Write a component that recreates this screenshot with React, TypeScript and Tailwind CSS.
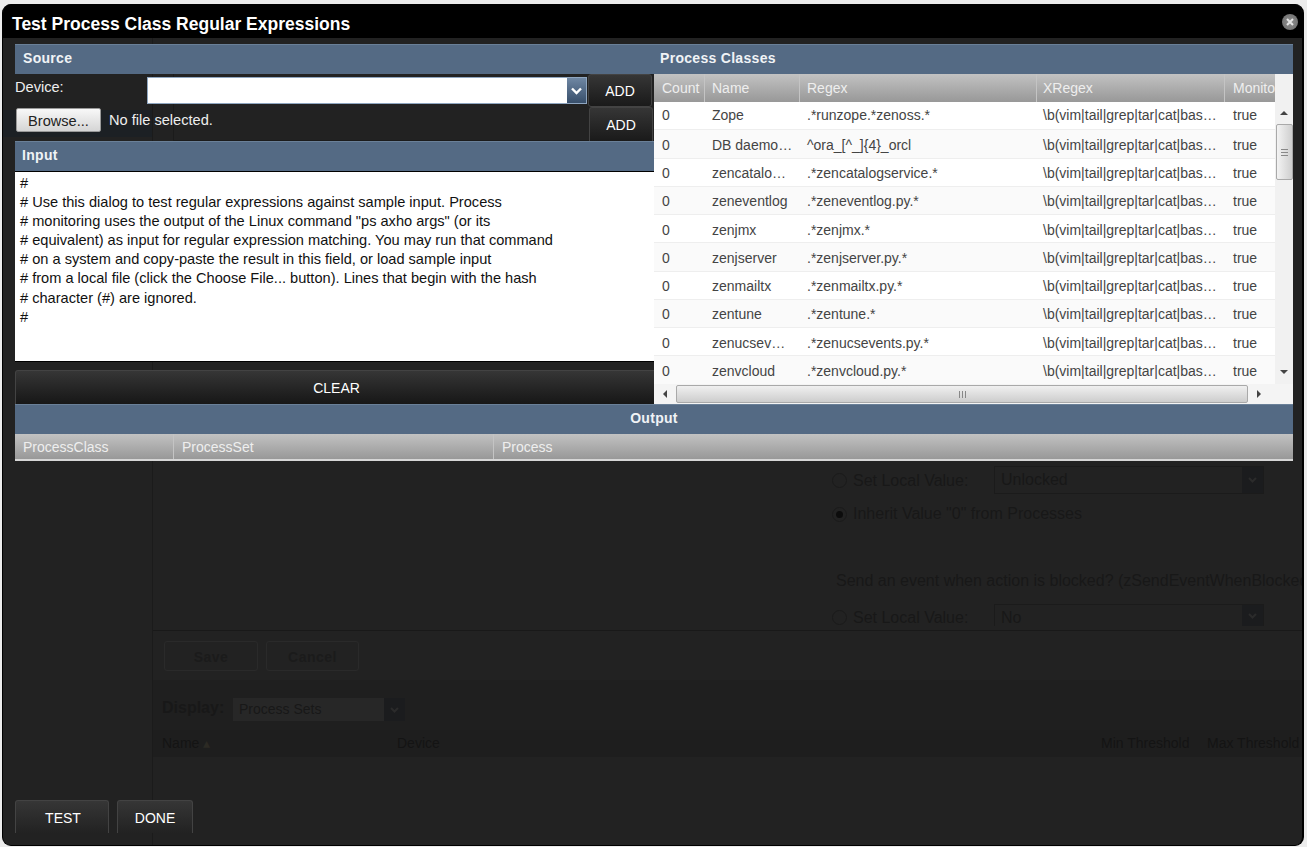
const FONT = "font-['Liberation_Sans',Arial,sans-serif]";

const processClasses = [
  ['Zope', '.*runzope.*zenoss.*'],
  ['DB daemo…', '^ora_[^_]{4}_orcl'],
  ['zencatalo…', '.*zencatalogservice.*'],
  ['zeneventlog', '.*zeneventlog.py.*'],
  ['zenjmx', '.*zenjmx.*'],
  ['zenjserver', '.*zenjserver.py.*'],
  ['zenmailtx', '.*zenmailtx.py.*'],
  ['zentune', '.*zentune.*'],
  ['zenucsev…', '.*zenucsevents.py.*'],
  ['zenvcloud', '.*zenvcloud.py.*'],
];

const inputText = `#
# Use this dialog to test regular expressions against sample input. Process
# monitoring uses the output of the Linux command "ps axho args" (or its
# equivalent) as input for regular expression matching. You may run that command
# on a system and copy-paste the result in this field, or load sample input
# from a local file (click the Choose File... button). Lines that begin with the hash
# character (#) are ignored.
#`;

const SectionHeader = ({ children, className = '' }: { children: React.ReactNode; className?: string }) => (
  <div className={`h-[30px] pb-[2px] bg-[#546a84] border-t border-[#6a8098] text-[14px] tracking-[0.3px] font-bold text-[#f0f3f6] flex items-center ${className}`}>
    {children}
  </div>
);

const DarkButton = ({ children, className = '' }: { children: React.ReactNode; className?: string }) => (
  <div className={`flex items-center justify-center rounded-t-[3px] border border-[#434343] bg-gradient-to-b from-[#363636] text-[14px] text-white ${className}`}>
    {children}
  </div>
);

const HeaderCell = ({ children, className = '' }: { children: React.ReactNode; className?: string }) => (
  <div className={`h-full shrink-0 overflow-hidden whitespace-nowrap border-r border-[#c4c4c4] flex items-center ${className}`}>
    {children}
  </div>
);

const GhostTrigger = () => (
  <div className="absolute right-0 top-0 flex h-full w-[21px] items-center justify-center bg-[#1b1c1e]">
    <svg width="9" height="6" viewBox="0 0 9 6"><path d="M1 1 L4.5 4.5 L8 1" fill="none" stroke="#2b2b2b" strokeWidth="2" /></svg>
  </div>
);

// the page behind the dialog, dimmed by the mask
const GhostPage = () => (
  <div className="absolute inset-0 overflow-hidden text-[16px] text-[#181818]">
    <div className="absolute left-[149px] top-0 bottom-0 w-px bg-[#1b1b1b]" />
    <div className="absolute left-0 top-[106px] h-[27px] w-[149px] bg-[#1c2024]" />
    <div className="absolute left-[170px] right-[400px] top-[70px] h-[67px] border-l border-b border-[#1b1b1b]" />
    <div className="absolute left-[150px] right-0 top-[626px] h-px bg-[#191919]" />
    <div className="absolute left-[150px] right-0 top-[676px] h-[77px] bg-[#1f1f1f]" />
    <div className="absolute left-[150px] right-0 top-[726px] h-[27px] bg-[#1e1e1e]" />
    <div className="absolute left-[829px] top-[469px] size-[15px] rounded-full border border-[#1a1a1a]" />
    <span className="absolute left-[850px] top-[465px]">Set Local Value:</span>
    <div className="absolute left-[991px] top-[462px] h-[28px] w-[270px] border border-[#1b1b1b]">
      <span className="absolute left-[6px] top-[1px]">Unlocked</span>
      <GhostTrigger />
    </div>
    <div className="absolute left-[829px] top-[503px] size-[15px] rounded-full border border-[#1a1a1a] p-[3px]">
      <div className="size-full rounded-full bg-[#0c0c0c]" />
    </div>
    <span className="absolute left-[850px] top-[498px]">Inherit Value "0" from Processes</span>
    <span className="absolute left-[833px] top-[565px] whitespace-nowrap">Send an event when action is blocked? (zSendEventWhenBlocked)</span>
    <div className="absolute left-[829px] top-[606px] size-[15px] rounded-full border border-[#1a1a1a]" />
    <span className="absolute left-[850px] top-[602px]">Set Local Value:</span>
    <div className="absolute left-[991px] top-[600px] h-[22px] w-[270px] border border-b-0 border-[#1b1b1b]">
      <span className="absolute left-[6px] top-[1px]">No</span>
      <GhostTrigger />
    </div>
    <div className="absolute left-[161px] top-[637px] flex h-[30px] w-[94px] items-center justify-center rounded-[3px] border border-[#2a2a2a] pt-[3px] text-[14px] tracking-[0.5px] font-bold text-[#1b1b1b]">Save</div>
    <div className="absolute left-[263px] top-[637px] flex h-[30px] w-[93px] items-center justify-center rounded-[3px] border border-[#2a2a2a] pt-[3px] text-[14px] tracking-[0.5px] font-bold text-[#1b1b1b]">Cancel</div>
    <span className="absolute left-[159px] top-[692px] font-bold">Display:</span>
    <div className="absolute left-[230px] top-[694px] h-[23px] w-[172px] bg-[#272727] text-[14px]">
      <span className="absolute left-[6px] top-[1px]">Process Sets</span>
      <GhostTrigger />
    </div>
    <span className="absolute left-[159px] top-[729px] text-[14px] text-[#141414]">Name <span className="text-[#2c2a24]">▴</span></span>
    <span className="absolute left-[394px] top-[729px] text-[14px] text-[#141414]">Device</span>
    <span className="absolute left-[1098px] top-[729px] text-[14px] text-[#141414]">Min Threshold</span>
    <span className="absolute left-[1204px] top-[729px] whitespace-nowrap text-[14px] text-[#141414]">Max Threshold</span>
  </div>
);

const ScrollArrow = ({ d }: { d: string }) => (
  <svg width="8" height="8" viewBox="0 0 8 8"><path d={d} fill="#444" /></svg>
);

const ProcessClassesGrid = () => (
  <div className="h-[330px] w-[639px] bg-[#f1f1f1] flex flex-col">
    <div className="h-[310px] flex">
      <div className="w-[621px]">
        <div className="h-[28px] flex bg-gradient-to-b from-[#c2c2c2] to-[#989898] text-[14px] text-[#eeeeee]">
          <HeaderCell className="w-[51px] pl-2">Count</HeaderCell>
          <HeaderCell className="w-[95px] pl-[7px]">Name</HeaderCell>
          <HeaderCell className="w-[237px] pl-[7px]">Regex</HeaderCell>
          <HeaderCell className="w-[188px] pl-[6px]">XRegex</HeaderCell>
          <HeaderCell className="w-[50px] pl-[8px] border-r-0">Monitor</HeaderCell>
        </div>
        {processClasses.map(([name, regex], i) => (
          <div key={name} className={`h-[28.25px] flex items-center border-b border-[#eeeeee] text-[14px] text-[#444] ${i % 2 ? 'bg-[#fafafa]' : 'bg-white'} ${i > 0 ? 'pt-[3.2px]' : ''}`}>
            <div className="w-[50px] px-2 shrink-0">0</div>
            <div className="w-[95px] px-2 shrink-0 whitespace-nowrap">{name}</div>
            <div className="w-[237px] px-2 shrink-0 whitespace-nowrap">{regex}</div>
            <div className="w-[188px] pl-[7px] shrink-0 whitespace-nowrap overflow-hidden">\b(vim|tail|grep|tar|cat|bas…</div>
            <div className="w-[51px] pl-[9px] shrink-0">true</div>
          </div>
        ))}
      </div>
      {/* vertical scrollbar */}
      <div className="w-[18px] pt-[28px] flex flex-col items-center">
        <div className="h-[22px] shrink-0 flex items-center justify-center"><ScrollArrow d="M0 6 L4 2 L8 6 Z" /></div>
        <div className="w-[17px] h-[56px] rounded-[2px] border border-[#a9a9a9] bg-gradient-to-r from-[#f3f3f3] to-[#cfcfcf] flex flex-col items-center justify-center gap-[2px]">
          <div className="w-[7px] h-px bg-[#888]" />
          <div className="w-[7px] h-px bg-[#888]" />
          <div className="w-[7px] h-px bg-[#888]" />
        </div>
        <div className="mt-auto h-[24px] flex items-center justify-center"><ScrollArrow d="M0 2 L8 2 L4 6 Z" /></div>
      </div>
    </div>
    {/* horizontal scrollbar */}
    <div className="h-[20px] flex items-center bg-[#f4f4f4]">
      <div className="w-[22px] flex justify-center"><ScrollArrow d="M6 0 L6 8 L2 4 Z" /></div>
      <div className="w-[572px] h-[18px] rounded-[2px] border border-[#a9a9a9] bg-gradient-to-b from-[#f0f0f0] to-[#cdcdcd] flex items-center justify-center gap-[2px]">
        <div className="w-px h-[7px] bg-[#888]" />
        <div className="w-px h-[7px] bg-[#888]" />
        <div className="w-px h-[7px] bg-[#888]" />
      </div>
      <div className="w-[22px] flex justify-center"><ScrollArrow d="M2 0 L2 8 L6 4 Z" /></div>
    </div>
  </div>
);

export default function App() {
  return (
    <div className={`h-[847px] w-[1307px] overflow-hidden bg-[#ececec] pl-[2px] pt-[4px] ${FONT}`}>
      <div className="relative h-[842px] w-[1302px] overflow-hidden rounded-[9px] bg-[#222222] border-r-[2px] border-b border-l border-black">
        <GhostPage />

        <div className="relative h-[34px] bg-black pl-[9px] pt-[7px] flex items-center text-[17.5px] font-bold text-white">
          Test Process Class Regular Expressions
          <div className="absolute right-[4px] top-[10px] flex size-[16px] items-center justify-center rounded-full bg-[radial-gradient(circle,#8f8f8f,#6a6a6a)] blur-[0.4px]">
            <svg width="8" height="8" viewBox="0 0 8 8"><path d="M1 1 L7 7 M7 1 L1 7" stroke="#e4e4e4" strokeWidth="2" /></svg>
          </div>
        </div>

        <div className="relative ml-[12px] mt-[6px] w-[1278px]">
          <div className="flex">
            <div className="w-[639px]">
              <SectionHeader className="pl-2">Source</SectionHeader>
              <div className="flex h-[33px]">
                <div className="w-[132px] pt-[3px] text-[14.6px] text-[#eeeeee]">Device:</div>
                <div className="mt-[3px] flex h-[27px] w-[440px] border border-[#8fa6c0] bg-white justify-end">
                  <div className="flex w-[19px] items-center justify-center bg-gradient-to-b from-[#6f87a3] to-[#384f6b]">
                    <svg width="11" height="8" viewBox="0 0 11 8"><path d="M1 1.5 L5.5 6 L10 1.5" fill="none" stroke="#fff" strokeWidth="2.4" /></svg>
                  </div>
                </div>
                <DarkButton className="ml-px h-[33px] w-[64px] rounded-b-[3px] pt-[2px] to-[#1a1a1a]">ADD</DarkButton>
              </div>
              <div className="flex h-[34px] items-start">
                <div className="mt-px flex h-[24px] w-[85px] items-center justify-center rounded-[2px] border border-[#999] bg-gradient-to-b from-[#f8f8f8] to-[#d5d5d5] pt-[3px] ml-px text-[14.6px] text-[#222]">Browse...</div>
                <span className="ml-[8px] mt-[3px] w-[479px] text-[14.6px] text-[#eeeeee]">No file selected.</span>
                <DarkButton className="ml-px h-[34px] w-[64px] shrink-0 border-b-0 pt-[2px] to-[#1a1a1a]">ADD</DarkButton>
              </div>
              <SectionHeader className="pl-[7px]">Input</SectionHeader>
              <div className="h-[191px] border-y border-black bg-white pt-[2px] pl-[5px] text-[14.6px] leading-[19.1px] text-[#111] whitespace-pre-wrap">{inputText}</div>
              <DarkButton className="mt-[8px] h-[34px] w-[643px] border-b-0 pt-[2px] to-[#171717]">CLEAR</DarkButton>
            </div>
            <div className="relative z-10 w-[639px]">
              <SectionHeader className="pl-[6px]">Process Classes</SectionHeader>
              <ProcessClassesGrid />
            </div>
          </div>

          <SectionHeader className="relative z-10 justify-center">Output</SectionHeader>
          <div className="h-[27px] flex bg-gradient-to-b from-[#c2c2c2] to-[#989898] border-b-[2px] border-[#d6d6d6] text-[14px] text-[#eeeeee]">
            <HeaderCell className="w-[159px] pl-2 pt-[2px]">ProcessClass</HeaderCell>
            <HeaderCell className="w-[320px] pl-2 pt-[2px]">ProcessSet</HeaderCell>
            <HeaderCell className="flex-1 pl-2 pt-[2px] border-r-0">Process</HeaderCell>
          </div>
        </div>

        <div className="absolute bottom-[12px] left-[12px] flex gap-[8px]">
          <DarkButton className="h-[33px] w-[94px] border-b-0 pt-[3px] pl-[2px] to-[#222222]">TEST</DarkButton>
          <DarkButton className="h-[33px] w-[76px] border-b-0 pt-[3px] to-[#222222]">DONE</DarkButton>
        </div>
      </div>
    </div>
  );
}
